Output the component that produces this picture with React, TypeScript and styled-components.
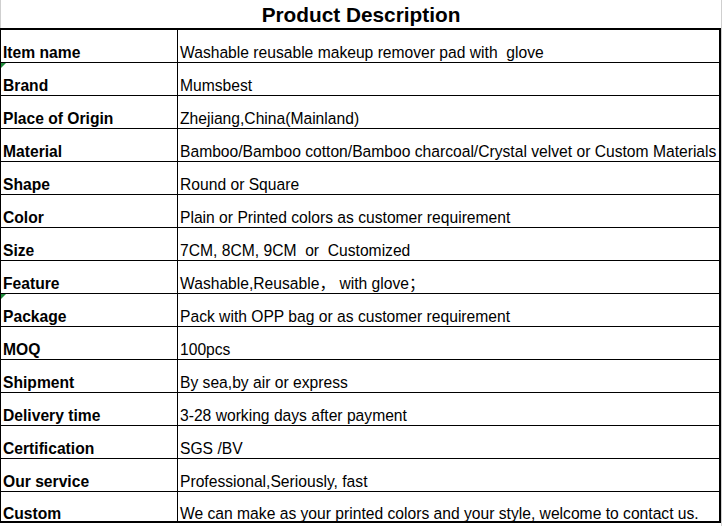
import React from "react";
import styled, { createGlobalStyle } from "styled-components";

const Global = createGlobalStyle`
  html, body { margin: 0; padding: 0; background: #fff; }
  body { font-family: "Liberation Sans", Arial, "Noto Sans CJK SC", sans-serif; color: #000; }
`;

const Page = styled.div`
  width: 722px;
  height: 526px;
  box-sizing: border-box;
  border-right: 1px solid #cfcfcf;
  display: flex;
  flex-direction: column;
  overflow: hidden;
`;

const Title = styled.h1`
  margin: 0;
  height: 28px;
  flex: none;
  box-sizing: border-box;
  border-left: 1px solid #cfcfcf;
  display: flex;
  align-items: flex-end;
  justify-content: center;
  padding-bottom: 1px;
  font-size: 20.8px;
  line-height: 24px;
  font-weight: bold;
`;

const Table = styled.div`
  width: 721px;
  flex: none;
  box-sizing: border-box;
  border-top: 2px solid #000;
  border-left: 1px solid #000;
  border-right: 2px solid #000;
  border-bottom: 2px solid #000;
  display: grid;
  grid-template-columns: 177px 1fr;
`;

const Cell = styled.div<{ $label?: boolean; $last?: boolean }>`
  position: relative;
  height: ${(p) => (p.$last ? 29 : 33)}px;
  box-sizing: border-box;
  border-bottom: ${(p) => (p.$last ? "none" : "1px solid #000")};
  border-right: ${(p) => (p.$label ? "1px solid #000" : "none")};
  display: flex;
  align-items: flex-end;
  padding: 0 0 ${(p) => (p.$last ? 0 : 0.5)}px 2px;
  font-size: 15.65px;
  line-height: ${(p) => (p.$last ? 15 : 18)}px;
  font-weight: ${(p) => (p.$label ? "bold" : "normal")};
  white-space: pre;
  overflow: hidden;
`;

const Flag = styled.span`
  position: absolute;
  left: 0;
  top: 0;
  width: 0;
  height: 0;
  border-top: 5px solid #1e8a3a;
  border-right: 5px solid transparent;
`;

const rows: { label: string; value: string; flag?: boolean }[] = [
  { label: "Item name", value: "Washable reusable makeup remover pad with  glove" },
  { label: "Brand", value: "Mumsbest", flag: true },
  { label: "Place of Origin", value: "Zhejiang,China(Mainland)" },
  { label: "Material", value: "Bamboo/Bamboo cotton/Bamboo charcoal/Crystal velvet or Custom Materials" },
  { label: "Shape", value: "Round or Square" },
  { label: "Color", value: "Plain or Printed colors as customer requirement" },
  { label: "Size", value: "7CM, 8CM, 9CM  or  Customized" },
  { label: "Feature", value: "Washable,Reusable， with glove；" },
  { label: "Package", value: "Pack with OPP bag or as customer requirement", flag: true },
  { label: "MOQ", value: "100pcs" },
  { label: "Shipment", value: "By sea,by air or express" },
  { label: "Delivery time", value: "3-28 working days after payment" },
  { label: "Certification", value: "SGS /BV" },
  { label: "Our service", value: "Professional,Seriously, fast" },
  { label: "Custom", value: "We can make as your printed colors and your style, welcome to contact us." },
];

export default function App() {
  return (
    <>
      <Global />
      <Page>
        <Title>Product Description</Title>
        <Table>
          {rows.map((r, i) => (
            <React.Fragment key={r.label}>
              <Cell $label $last={i === rows.length - 1}>
                {r.flag && <Flag />}
                {r.label}
              </Cell>
              <Cell $last={i === rows.length - 1}>{r.value}</Cell>
            </React.Fragment>
          ))}
        </Table>
      </Page>
    </>
  );
}
